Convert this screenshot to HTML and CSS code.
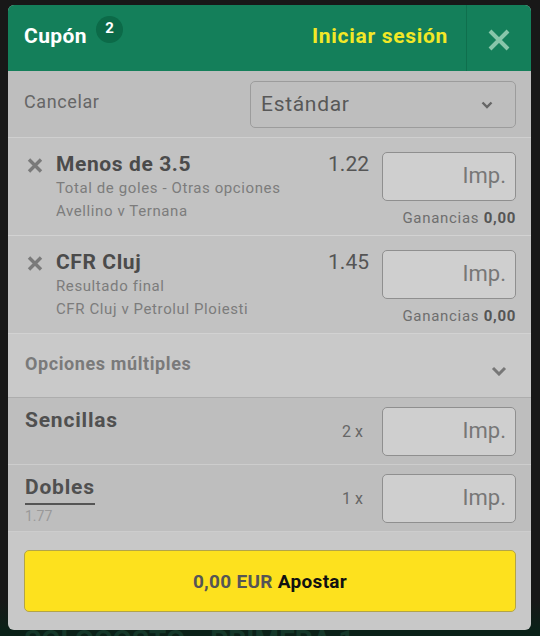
FILE: index.html
```html
<html>
<head>
    <meta charset="UTF-8">
    <title>Cupón</title>
    <link rel="stylesheet" href="styles.css">
</head>
<body>
    <div class="backdrop">
        <div class="bg-title top">MALTA - 1ª DIVISION</div>
        <div class="bg-title bottom">SOLOCOSTO - PRIMERA 1</div>
    </div>
    <div class="coupon">
        <div class="header">
            <div class="title">Cupón <span class="badge">2</span></div>
            <a class="login">Iniciar sesión</a>
            <div class="close">
                <svg width="24" height="24" viewBox="0 0 24 24"><path d="M3 3L21 21M21 3L3 21" stroke="#88c6aa" stroke-width="4"/></svg>
            </div>
        </div>
        <div class="toolbar">
            <span class="cancel">Cancelar</span>
            <div class="select">
                <span>Estándar</span>
                <svg width="12" height="8" viewBox="0 0 12 8"><path d="M1.5 1.5L6 6L10.5 1.5" fill="none" stroke="#666" stroke-width="2.4"/></svg>
            </div>
        </div>
        <div class="bet">
            <div class="remove">
                <svg width="16" height="15" viewBox="0 0 16 15"><path d="M2 1.5L14 13.5M14 1.5L2 13.5" stroke="#7a7a7a" stroke-width="3.4"/></svg>
            </div>
            <div class="bet-info">
                <div class="bet-name">Menos de 3.5</div>
                <div class="bet-sub">Total de goles - Otras opciones</div>
                <div class="bet-sub">Avellino v Ternana</div>
            </div>
            <div class="odds">1.22</div>
            <div class="stake">
                <div class="input">Imp.</div>
                <div class="win">Ganancias <b>0,00</b></div>
            </div>
        </div>
        <div class="bet">
            <div class="remove">
                <svg width="16" height="15" viewBox="0 0 16 15"><path d="M2 1.5L14 13.5M14 1.5L2 13.5" stroke="#7a7a7a" stroke-width="3.4"/></svg>
            </div>
            <div class="bet-info">
                <div class="bet-name">CFR Cluj</div>
                <div class="bet-sub">Resultado final</div>
                <div class="bet-sub">CFR Cluj v Petrolul Ploiesti</div>
            </div>
            <div class="odds">1.45</div>
            <div class="stake">
                <div class="input">Imp.</div>
                <div class="win">Ganancias <b>0,00</b></div>
            </div>
        </div>
        <div class="multi">
            <span>Opciones múltiples</span>
            <svg width="16" height="10" viewBox="0 0 16 10"><path d="M2 2L8 8L14 2" fill="none" stroke="#777" stroke-width="3"/></svg>
        </div>
        <div class="combo">
            <div class="combo-info">
                <div class="combo-name">Sencillas</div>
            </div>
            <div class="count">2 x</div>
            <div class="input">Imp.</div>
        </div>
        <div class="combo">
            <div class="combo-info">
                <div class="combo-name underline">Dobles</div>
                <div class="combo-odds">1.77</div>
            </div>
            <div class="count">1 x</div>
            <div class="input">Imp.</div>
        </div>
        <div class="footer">
            <button class="btn"><span class="amount">0,00 EUR</span> Apostar</button>
        </div>
    </div>
</body>
</html>
```

FILE: styles.css
```css
* {
    box-sizing: border-box;
}
body {
    margin: 0;
    width: 540px;
    height: 636px;
    background: #161616;
    font-family: Roboto, "Liberation Sans", sans-serif;
    overflow: hidden;
    position: relative;
}
.backdrop {
    height: 636px;
    display: flex;
    flex-direction: column;
    justify-content: space-between;
    background: linear-gradient(#181818 0, #181818 600px, #0b2118 630px);
}
.bg-title {
    font-size: 28px;
    font-weight: bold;
    padding-left: 24px;
    line-height: 30px;
}
.bg-title.top {
    color: #5a5a5a;
    margin-top: -24px;
}
.bg-title.bottom {
    color: #15382a;
    margin-bottom: -20px;
}
.coupon {
    position: absolute;
    top: 5px;
    left: 8px;
    width: 523px;
    height: 625px;
    background: #c8c8c8;
    border-radius: 6px;
    overflow: hidden;
}
.header {
    height: 66px;
    background: #147f5a;
    display: flex;
    align-items: center;
}
.title {
    flex: 1;
    color: #fff;
    font-size: 21px;
    letter-spacing: 0.4px;
    font-weight: bold;
    padding-left: 16px;
    display: flex;
    align-items: center;
    margin-top: -4px;
}
.badge {
    display: inline-block;
    width: 27px;
    height: 27px;
    border-radius: 50%;
    background: #0c6a48;
    font-size: 15px;
    letter-spacing: 0;
    line-height: 24px;
    text-align: center;
    margin-left: 9px;
    margin-top: -14px;
}
.login {
    color: #f2e827;
    font-size: 21px;
    letter-spacing: 0.7px;
    font-weight: bold;
    margin-right: 18px;
    margin-top: -4px;
}
.close {
    width: 65px;
    height: 66px;
    border-left: 1px solid #0f6f4d;
    display: flex;
    align-items: center;
    justify-content: center;
    padding-top: 3px;
}
.toolbar {
    height: 67px;
    background: #bebebe;
    display: flex;
    align-items: center;
    justify-content: space-between;
    padding: 0 15px 0 16px;
    border-bottom: 1px solid #cfcfcf;
}
.cancel {
    font-size: 18px;
    letter-spacing: 0.6px;
    color: #666;
    margin-top: -6px;
}
.select {
    width: 266px;
    height: 47px;
    border: 1px solid #9c9c9c;
    border-radius: 5px;
    display: flex;
    align-items: center;
    justify-content: space-between;
    padding: 0 22px 0 10px;
    font-size: 21px;
    letter-spacing: 0.7px;
    color: #585858;
}
.select svg {
    margin-top: 2px;
}
.bet {
    height: 98px;
    background: #c2c2c2;
    border-bottom: 1px solid #d2d2d2;
    display: flex;
    padding: 13px 15px 0 19px;
}
.remove {
    width: 29px;
    padding-top: 7px;
}
.bet-info {
    flex: 1;
}
.bet-name {
    font-size: 21px;
    letter-spacing: 0.6px;
    font-weight: bold;
    color: #4b4b4b;
    line-height: 26px;
}
.bet-sub {
    font-size: 15px;
    letter-spacing: 0.6px;
    color: #7c7c7c;
    line-height: 23px;
}
.odds {
    font-size: 21px;
    color: #555;
    line-height: 26px;
    margin-right: 13px;
}
.stake {
    width: 134px;
    text-align: right;
}
.input {
    width: 134px;
    height: 49px;
    border: 1px solid #8f8f8f;
    border-radius: 5px;
    background: #cfcfcf;
    font-size: 22px;
    color: #777;
    text-align: right;
    padding: 10px 9px 0 0;
}
.stake .input {
    margin-top: 1px;
}
.win {
    font-size: 15px;
    letter-spacing: 0.7px;
    color: #6e6e6e;
    margin-top: 8px;
}
.win b {
    color: #555;
}
.multi {
    height: 64px;
    background: #c9c9c9;
    border-bottom: 1px solid #adadad;
    display: flex;
    align-items: center;
    justify-content: space-between;
    padding: 0 24px 0 17px;
    font-size: 18px;
    letter-spacing: 0.6px;
    font-weight: bold;
    color: #7a7a7a;
}
.multi span {
    margin-top: -4px;
}
.multi svg {
    margin-top: 10px;
}
.combo {
    height: 67px;
    background: #bebebe;
    border-bottom: 1px solid #cdcdcd;
    display: flex;
    align-items: center;
    padding: 0 15px 0 17px;
}
.combo-info {
    flex: 1;
    align-self: flex-start;
    padding-top: 10px;
}
.combo-name {
    font-size: 21px;
    letter-spacing: 0.8px;
    font-weight: bold;
    color: #505050;
    display: inline-block;
    line-height: 25px;
}
.combo-name.underline {
    border-bottom: 2px solid #555;
    padding-bottom: 3px;
}
.combo-odds {
    font-size: 14px;
    color: #999;
    margin-top: 3px;
}
.count {
    font-size: 16px;
    color: #666;
    margin-right: 19px;
}
.footer {
    padding: 18px 15px 0 16px;
}
.btn {
    width: 492px;
    height: 62px;
    background: #fde11e;
    border: 1px solid #b3a447;
    border-radius: 5px;
    font-family: Roboto, "Liberation Sans", sans-serif;
    font-size: 19px;
    letter-spacing: 0.3px;
    font-weight: bold;
    color: #111;
    cursor: pointer;
}
.amount {
    color: #555;
}
```
